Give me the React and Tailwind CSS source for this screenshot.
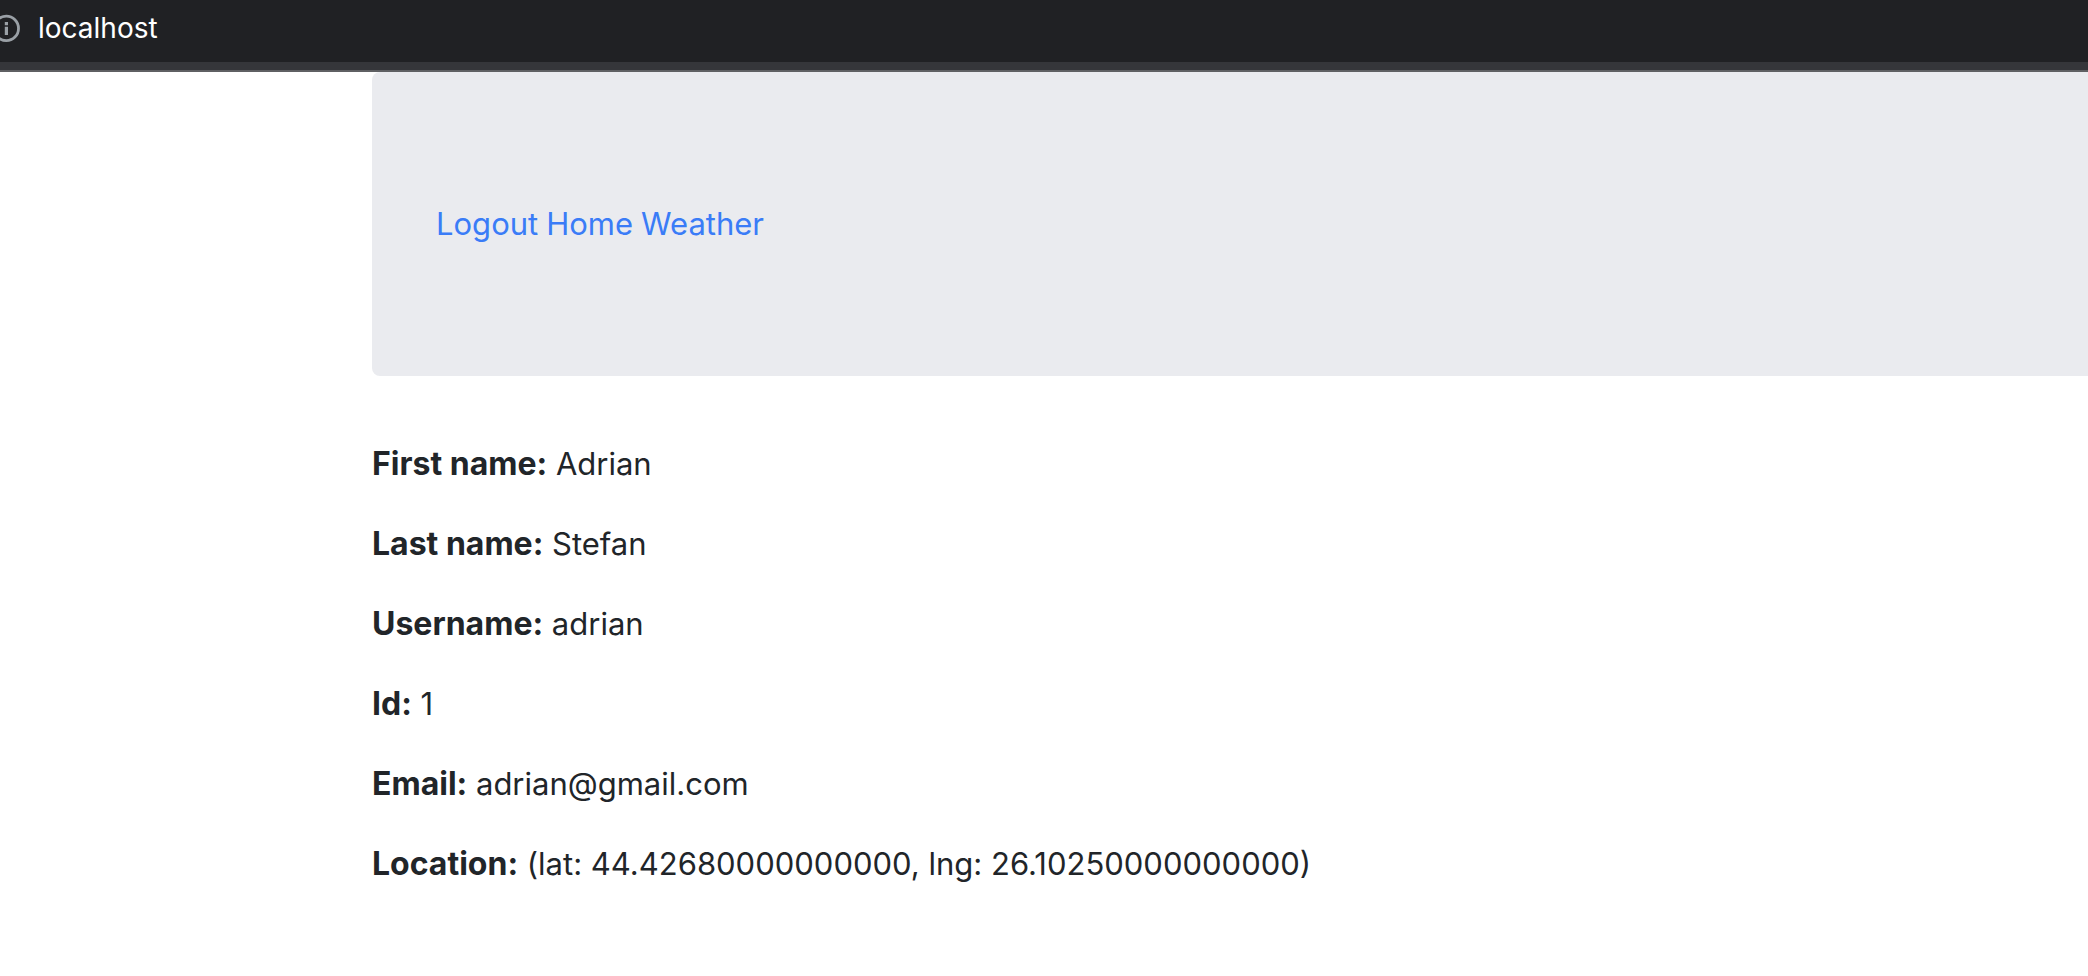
const details = [
  ['First name:', 'Adrian'],
  ['Last name:', 'Stefan'],
  ['Username:', 'adrian'],
  ['Id:', '1'],
  ['Email:', 'adrian@gmail.com'],
  ['Location:', '(lat: 44.42680000000000, lng: 26.10250000000000)'],
];

function AddressBar() {
  return (
    <header className="flex h-[62px] items-center overflow-hidden bg-[#202124] pb-1.5">
      <button type="button" aria-label="Site information" className="-ml-2 shrink-0">
        <svg className="block size-7" viewBox="0 0 28 28" fill="none">
          <circle cx="14.3" cy="14.4" r="12.2" stroke="#9aa0a6" strokeWidth="2.8" />
          <path d="M14.4 12.7V21M14.4 8v3.3" stroke="#9aa0a6" strokeWidth="3.2" />
        </svg>
      </button>
      <span className="ml-[18px] text-[28px] text-white">localhost</span>
    </header>
  );
}

export default function App() {
  return (
    <div className="min-h-screen overflow-hidden bg-white font-['Inter',sans-serif] text-[#212529]">
      <AddressBar />
      <div className="h-2.5 border-b-2 border-[#5f6063] bg-[#35363a]" />
      <main className="ml-[372px]">
        <nav className="flex items-center gap-2 rounded-l-lg bg-[#eaebef] py-32 pl-16 text-[31px] leading-[48px] text-[#3a7cf7]">
          <a href="#logout">Logout</a>
          <a href="#home">Home</a>
          <a href="#weather">Weather</a>
        </nav>
        <div className="mt-16 flex flex-col gap-8 text-[31px] leading-[48px]">
          {details.map(([label, value]) => (
            <p key={label}>
              <b className="text-[32px] font-bold leading-[48px]">{label}</b> {value}
            </p>
          ))}
        </div>
      </main>
    </div>
  );
}
